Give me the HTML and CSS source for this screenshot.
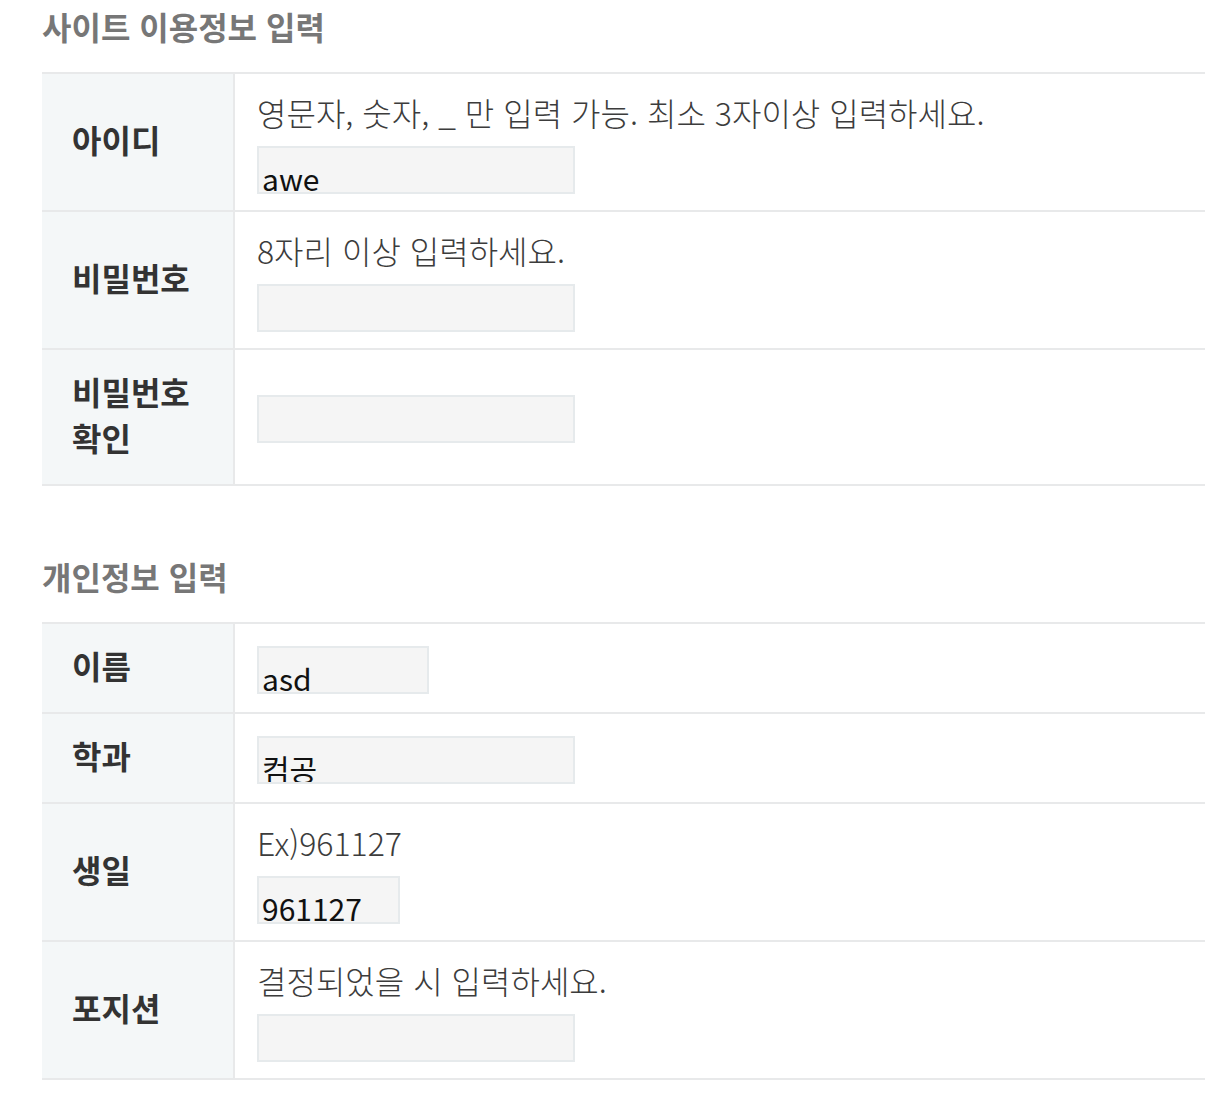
FILE: index.html
```html
<!DOCTYPE html>
<html lang="ko">
<head>
<meta charset="utf-8">
<title>회원가입</title>
<link rel="stylesheet" href="styles.css">
</head>
<body>
<div class="page">
  <section class="block">
    <h2 class="block-title">사이트 이용정보 입력</h2>
    <table class="form-table">
      <tr>
        <th class="label">아이디</th>
        <td class="cell">
          <p class="desc">영문자, 숫자, _ 만 입력 가능. 최소 3자이상 입력하세요.</p>
          <div class="field">awe</div>
        </td>
      </tr>
      <tr>
        <th class="label">비밀번호</th>
        <td class="cell">
          <p class="desc">8자리 이상 입력하세요.</p>
          <div class="field"></div>
        </td>
      </tr>
      <tr>
        <th class="label">비밀번호 확인</th>
        <td class="cell">
          <div class="field"></div>
        </td>
      </tr>
    </table>
  </section>

  <section class="block block-second">
    <h2 class="block-title">개인정보 입력</h2>
    <table class="form-table">
      <tr>
        <th class="label">이름</th>
        <td class="cell">
          <div class="field field-name">asd</div>
        </td>
      </tr>
      <tr>
        <th class="label">학과</th>
        <td class="cell">
          <div class="field">컴공</div>
        </td>
      </tr>
      <tr>
        <th class="label">생일</th>
        <td class="cell">
          <p class="desc">Ex)961127</p>
          <div class="field field-birth">961127</div>
        </td>
      </tr>
      <tr>
        <th class="label">포지션</th>
        <td class="cell">
          <p class="desc">결정되었을 시 입력하세요.</p>
          <div class="field"></div>
        </td>
      </tr>
    </table>
  </section>
</div>
</body>
</html>
```

FILE: styles.css
```css
html, body {
  margin: 0;
  padding: 0;
  background: #ffffff;
}

body {
  font-family: "Noto Sans CJK KR", "Noto Sans", sans-serif;
  color: #333333;
  overflow-x: hidden;
}

.page {
  padding: 4px 0 0 42px;
}

.block-title {
  margin: 0 0 24px 0;
  font-size: 32px;
  font-weight: 700;
  line-height: 44px;
  color: #777777;
}

.block-second {
  margin-top: 68px;
}

.form-table {
  width: 100%;
  border-collapse: collapse;
  border-top: 2px solid #e8e9ea;
}

.form-table tr {
  border-bottom: 2px solid #e8e9ea;
}

.label {
  width: 131px;
  padding: 18px 30px 24px 30px;
  background: #f4f7f8;
  border-right: 2px solid #e8e9ea;
  text-align: left;
  vertical-align: middle;
  font-size: 32px;
  line-height: 46px;
  font-weight: 700;
  color: #333333;
}

.cell {
  padding: 20px 22px 16px 22px;
  vertical-align: middle;
}

.desc {
  margin: 0 0 16px 0;
  font-size: 32px;
  line-height: 36px;
  font-weight: 300;
  color: #3c3c3c;
  white-space: nowrap;
}

.field {
  box-sizing: border-box;
  width: 318px;
  height: 48px;
  padding: 8px 0 0 3px;
  border: 2px solid #e6eaec;
  background: #f5f5f5;
  overflow: hidden;
  font-size: 30px;
  line-height: normal;
  color: #111111;
  white-space: nowrap;
}

.field-name {
  width: 172px;
}

.field-birth {
  width: 143px;
}
```
